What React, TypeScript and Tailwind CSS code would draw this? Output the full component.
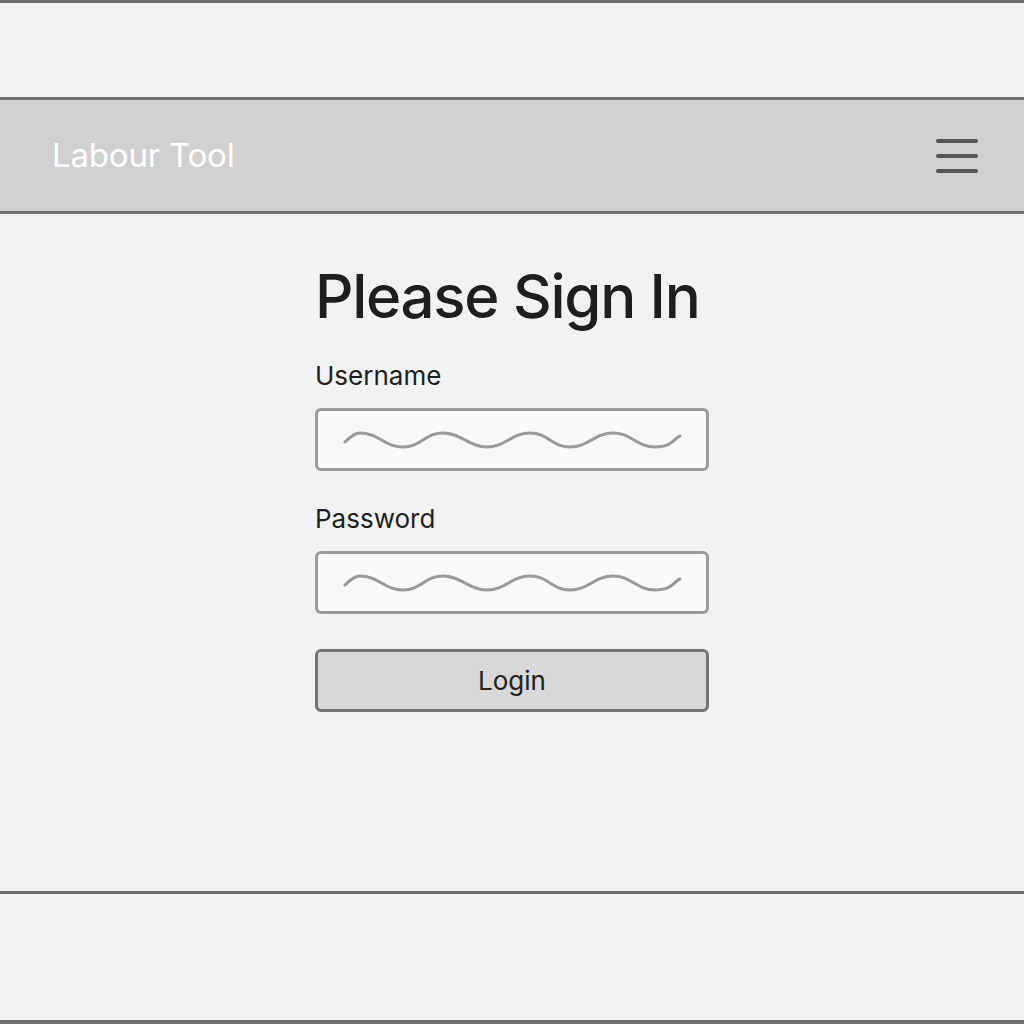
import React from 'react';

// Wavy placeholder line drawn inside the empty inputs
function Squiggle() {
  return (
    <svg width="340" height="20" viewBox="0 0 340 20" fill="none" className="block">
      <path
        d="M2 12 C8 6, 12 3, 17 3 C35 3, 42 17, 60 17 S82 3, 100 3 S126 17, 144 17 S169 3, 187 3 S209 17, 227 17 S252 3, 270 3 S294 17, 312 17 S330 9, 337 6"
        stroke="#9a9a9a"
        strokeWidth={3}
        strokeLinecap="round"
      />
    </svg>
  );
}

function Field({ label }: { label: string }) {
  return (
    <div className="flex flex-col">
      <label className="pt-[3px] text-[26px] leading-none text-[#1e1e1e]">{label}</label>
      <div className="mt-[19px] h-[63px] rounded-[6px] border-[3px] border-[#9a9a9a] bg-[#f9f9f9] flex items-center pl-[25px]">
        <Squiggle />
      </div>
    </div>
  );
}

export default function App() {
  return (
    <div
      className="h-screen flex flex-col bg-[#f2f2f2]"
      style={{ fontFamily: 'Inter, "Noto Sans", sans-serif' }}
    >
      <div className="h-[3px] bg-[#6e6e6e]" />
      <div className="h-[94px]" />

      {/* Top bar */}
      <header className="h-[117px] border-y-[3px] border-[#6e6e6e] bg-[#d0d0d0] flex items-center justify-between pl-[52px] pr-[46px]">
        <span className="text-[33px] text-white leading-none tracking-[-0.2px]">Labour Tool</span>
        <button className="flex flex-col gap-[11px]" aria-label="menu">
          <span className="block w-[42px] h-[4px] rounded-full bg-[#555]" />
          <span className="block w-[42px] h-[4px] rounded-full bg-[#555]" />
          <span className="block w-[42px] h-[4px] rounded-full bg-[#555]" />
        </button>
      </header>

      {/* Sign in form */}
      <main className="flex-1">
        <div className="mx-auto w-[394px] pt-[52px] flex flex-col">
          <h1 className="text-[60px] font-medium leading-none tracking-[-1.3px] whitespace-nowrap text-[#1e1e1e]">
            Please Sign In
          </h1>
          <div className="mt-[34px] flex flex-col gap-[32px]">
            <Field label="Username" />
            <Field label="Password" />
          </div>
          <button className="mt-[35px] h-[63px] rounded-[6px] border-[3px] border-[#747474] bg-[#d9d9d9] text-[26px] text-[#222]">
            Login
          </button>
        </div>
      </main>

      <div className="h-[3px] bg-[#6e6e6e]" />
      <div className="h-[126px]" />
      <div className="h-[4px] bg-[#6e6e6e]" />
    </div>
  );
}
